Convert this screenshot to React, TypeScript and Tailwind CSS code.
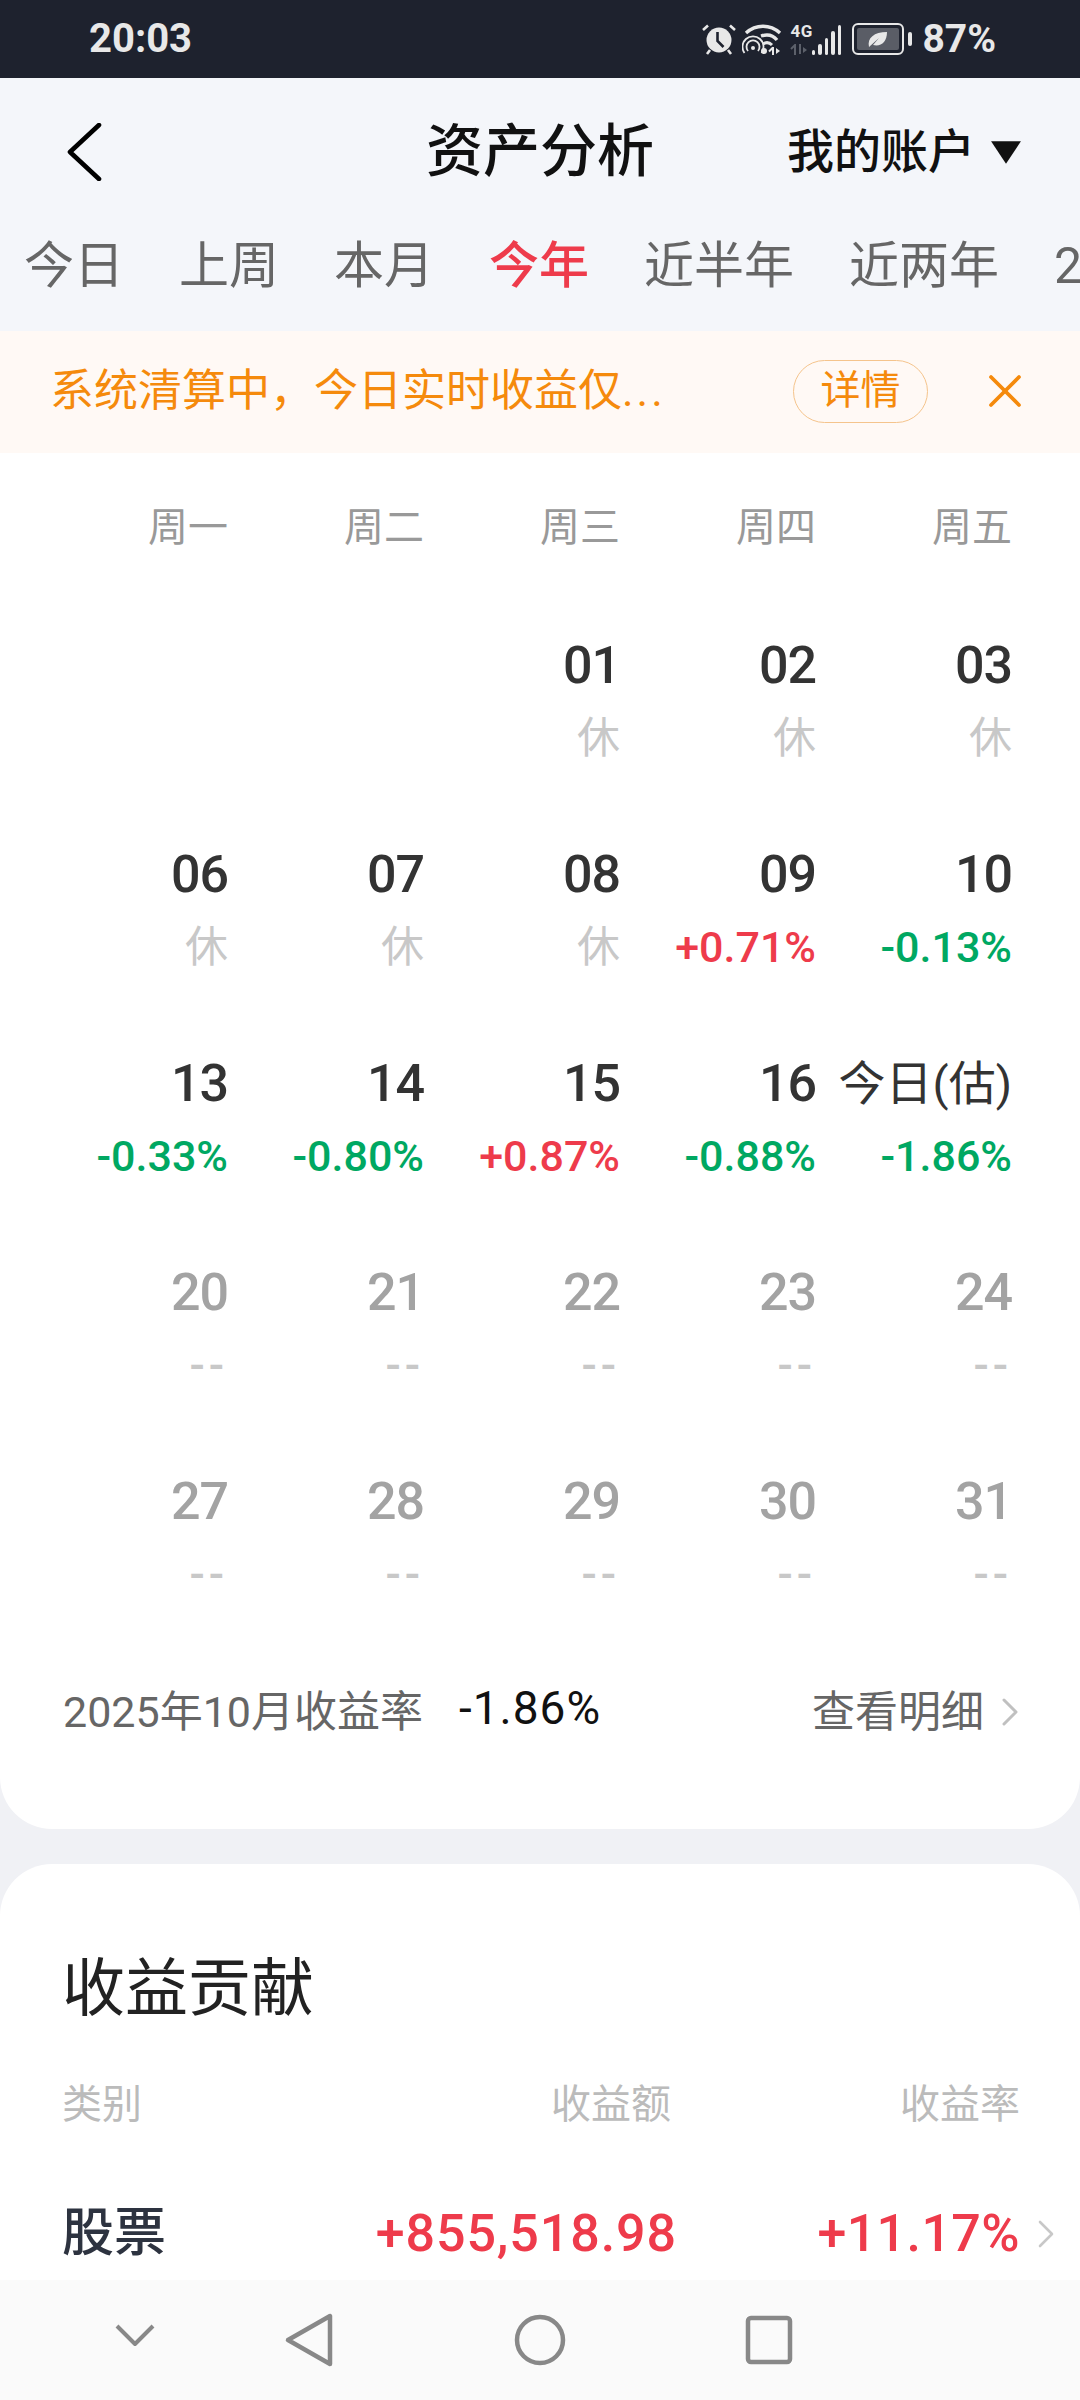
import { ChevronRight, X } from "lucide-react";

type Day = { date: string; sub: string; tone: "rest" | "up" | "down" | "none"; future?: boolean };

const weekdays = ["周一", "周二", "周三", "周四", "周五"];
const tabs = ["今日", "上周", "本月", "今年", "近半年", "近两年", "2"];

const rest = (date: string): Day => ({ date, sub: "休", tone: "rest" });
const up = (date: string, sub: string): Day => ({ date, sub, tone: "up" });
const down = (date: string, sub: string): Day => ({ date, sub, tone: "down" });
const later = (date: string): Day => ({ date, sub: "--", tone: "none", future: true });

const days: (Day | null)[] = [
  null,
  null,
  rest("01"),
  rest("02"),
  rest("03"),
  rest("06"),
  rest("07"),
  rest("08"),
  up("09", "+0.71%"),
  down("10", "-0.13%"),
  down("13", "-0.33%"),
  down("14", "-0.80%"),
  up("15", "+0.87%"),
  down("16", "-0.88%"),
  down("今日(估)", "-1.86%"),
  later("20"),
  later("21"),
  later("22"),
  later("23"),
  later("24"),
  later("27"),
  later("28"),
  later("29"),
  later("30"),
  later("31"),
];

const StatusIcons = () => (
  <div className="flex items-center text-[#e8e8e8]">
    {/* alarm */}
    <svg width="34" height="32" viewBox="0 0 34 32" fill="none">
      <circle cx="17" cy="17" r="12.5" fill="currentColor" />
      <path d="M15.5 9v9l6 6" stroke="#1e222e" strokeWidth="2.6" />
      <path d="M1 7l5-4.5M33 7l-5-4.5M8 27l-3 4M26 27l3 4" stroke="currentColor" strokeWidth="2.6" />
    </svg>
    {/* wifi with hotspot */}
    <svg width="42" height="32" viewBox="0 0 42 32" fill="none" stroke="currentColor" className="ml-[6px]">
      <path d="M4 10C14 1 28 1 38 10" strokeWidth="3.4" />
      <path d="M19 13c6-2 12-1 16 4" strokeWidth="3.4" />
      <path d="M21 21c3-2 6-2 9 1" strokeWidth="3" />
      <circle cx="11" cy="25" r="2" fill="currentColor" stroke="none" />
      <path d="M6 28a6.5 6.5 0 1 1 10 0" strokeWidth="1.8" />
      <path d="M2.5 30a10.5 10.5 0 1 1 17 0" strokeWidth="1.8" />
      <circle cx="22" cy="28" r="3" fill="currentColor" stroke="none" />
      <path d="M31 24v8M27 28.5l4-4" strokeWidth="2" />
      <path d="M34 25v6l4-3z" fill="currentColor" stroke="none" />
    </svg>
    {/* 4G and signal bars */}
    <div className="relative ml-[6px] flex h-[32px] w-[51px] items-end justify-end gap-[3px]">
      <span className="absolute left-0 top-[-1px] text-[17px] font-bold leading-[18px] tracking-[0.5px]">4G</span>
      <svg width="17" height="11" viewBox="0 0 17 11" className="absolute bottom-0 left-0 text-[#5c606a]" fill="none" stroke="currentColor" strokeWidth="2">
        <path d="M5 11V1L1 5M10 0v10" />
        <path d="M13 3v6l4-3z" fill="currentColor" stroke="none" />
      </svg>
      <i className="h-[5px] w-[3.5px] rounded-sm bg-current" />
      <i className="h-[11px] w-[3.5px] rounded-sm bg-current" />
      <i className="h-[17px] w-[3.5px] rounded-sm bg-current" />
      <i className="h-[24px] w-[3.5px] rounded-sm bg-current" />
      <i className="h-[30px] w-[3.5px] rounded-sm bg-current" />
    </div>
    {/* battery, saver mode */}
    <svg width="60" height="32" viewBox="0 0 60 32" fill="none" className="ml-[11px]">
      <rect x="1" y="1" width="50" height="30" rx="5" stroke="currentColor" strokeWidth="2" />
      <rect x="5" y="5" width="42" height="22" rx="2" fill="#5a5d66" />
      <rect x="56" y="9" width="4" height="14" rx="2" fill="currentColor" />
      <path d="M17 24c-2-9 5-15 18-15 0 10-6 15-14 13l6-7z" fill="currentColor" />
    </svg>
  </div>
);

const CalendarCell = ({ day }: { day: Day | null }) => {
  if (!day) return <div />;
  const isLabel = day.date.length > 2;
  const subColor =
    day.tone === "up"
      ? "text-[#ee3b4b]"
      : day.tone === "down"
        ? "text-[#00a862]"
        : "text-[#c8c8c8]";
  const subSize =
    day.tone === "rest"
      ? "text-[43px] font-normal"
      : day.tone === "none"
        ? "text-[45px] font-medium tracking-[4px]"
        : "text-[43px] font-medium";
  return (
    <div className="flex h-[209px] flex-col items-end">
      <div
        className={`h-[72px] leading-[72px] ${day.future ? "text-[#a3a3a3]" : "text-[#333333]"} ${
          isLabel ? "text-[47px]" : "text-[52px] font-medium tracking-[-1px]"
        }`}
      >
        {day.date}
      </div>
      <div className={`h-[72px] leading-[72px] ${subColor} ${subSize}`}>{day.sub}</div>
    </div>
  );
};

export default function App() {
  return (
    <div className="relative flex h-[2400px] w-[1080px] flex-col overflow-hidden bg-[#f0f1f5] font-['Roboto','Noto_Sans_CJK_SC',sans-serif]">
      <div className="flex h-[78px] shrink-0 items-center justify-between bg-[#1e222e] pl-[89px] pr-[84px]">
        <span className="text-[40px] font-bold text-[#e8e8e8]">20:03</span>
        <div className="flex items-center gap-[10px]">
          <StatusIcons />
          <span className="text-[39px] font-bold text-[#e8e8e8]">87%</span>
        </div>
      </div>

      <div className="relative flex h-[138px] shrink-0 items-center justify-center bg-[#f4f6fa] pt-[10px]">
        <svg width="36" height="58" viewBox="0 0 36 58" fill="none" className="absolute left-[66px] top-[45px]">
          <path d="M33 2L4 29l29 27" stroke="#000000" strokeWidth="4.6" strokeLinecap="round" strokeLinejoin="round" />
        </svg>
        <h1 className="text-[57px] font-medium text-[#111111]">资产分析</h1>
        <div className="absolute right-[58px] top-0 flex h-full items-center gap-[15px] pt-[10px]">
          <span className="text-[47px] font-medium text-[#111111]">我的账户</span>
          <svg width="32" height="26" viewBox="0 0 30 24">
            <path d="M1 2h28L15 23z" fill="#111111" />
          </svg>
        </div>
      </div>

      <div className="flex h-[115px] shrink-0 items-center gap-[55px] overflow-hidden whitespace-nowrap bg-[#f4f6fa] pb-[14px] pl-[24px]">
        {tabs.map((tab) => (
          <span
            key={tab}
            className={`text-[50px] ${tab === "今年" ? "font-medium text-[#ee3b4b]" : "text-[#666666]"}`}
          >
            {tab}
          </span>
        ))}
      </div>

      <div className="flex h-[122px] shrink-0 items-center bg-[#fff9f5] pb-[2px] pl-[50px] text-[#f58a0c]">
        <span className="w-[743px] text-[44px]">
          系统清算中，今日实时收益仅<span className="tracking-[3px]">...</span>
        </span>
        <span className="flex h-[63px] w-[135px] items-center justify-center rounded-full border border-[#f5c48c] text-[40px]">
          详情
        </span>
        <X className="ml-[49px] h-[56px] w-[56px]" strokeWidth={1.6} />
      </div>

      <div className="shrink-0 rounded-b-[52px] bg-white pb-[77px] pl-[32px] pr-[68px]">
        <div className="grid h-[150px] grid-cols-5 items-center text-right text-[40px] text-[#999999]">
          {weekdays.map((w) => (
            <span key={w}>{w}</span>
          ))}
        </div>
        <div className="grid grid-cols-5 pt-[27px]">
          {days.map((day, i) => (
            <CalendarCell key={i} day={day} />
          ))}
        </div>
        <div className="-mr-[22px] -mt-[3px] flex h-[80px] items-center pl-[31px]">
          <span className="text-[43px] text-[#666666]">2025年10月收益率</span>
          <span className="mb-[8px] ml-[36px] text-[46px] tracking-[1px] text-[#111111]">-1.86%</span>
          <span className="ml-auto text-[43px] text-[#666666]">查看明细</span>
          <ChevronRight className="ml-[2px] h-[48px] w-[48px] text-[#c0c0c0]" strokeWidth={1.5} />
        </div>
      </div>

      <div className="mt-[35px] flex-1 rounded-t-[52px] bg-white pl-[62px] pr-[60px]">
        <h2 className="pt-[85px] text-[63px] leading-[80px] text-[#222222]">收益贡献</h2>
        <div className="mt-[46px] flex items-center text-[40px] leading-[60px] text-[#bbbbbb]">
          <span>类别</span>
          <span className="ml-auto">收益额</span>
          <span className="w-[349px] text-right">收益率</span>
        </div>
        <div className="relative mt-[64px] flex items-center leading-[70px]">
          <span className="text-[52px] font-medium text-[#2d3340]">股票</span>
          <span className="ml-auto text-[52px] font-medium tracking-[0.9px] text-[#ee3b4b]">+855,518.98</span>
          <span className="w-[343px] text-right text-[52px] font-medium tracking-[0.4px] text-[#ee3b4b]">+11.17%</span>
          <ChevronRight className="absolute -right-[50px] top-[11px] h-[48px] w-[48px] text-[#c8c8c8]" strokeWidth={1.3} />
        </div>
      </div>

      {/* system navigation bar sits over the scrolling content */}
      <div className="absolute inset-x-0 bottom-0 h-[120px] bg-[#fafafa]">
        <svg width="1080" height="120" viewBox="0 0 1080 120" fill="none" stroke="#888888" strokeWidth="4.5" strokeLinejoin="round">
          <path d="M117 46l18 18 18-18" strokeWidth="4" />
          <path d="M330 36v48l-42-24z" />
          <circle cx="540" cy="60" r="23" />
          <rect x="748" y="38" width="42" height="44" rx="3" />
        </svg>
      </div>
    </div>
  );
}
